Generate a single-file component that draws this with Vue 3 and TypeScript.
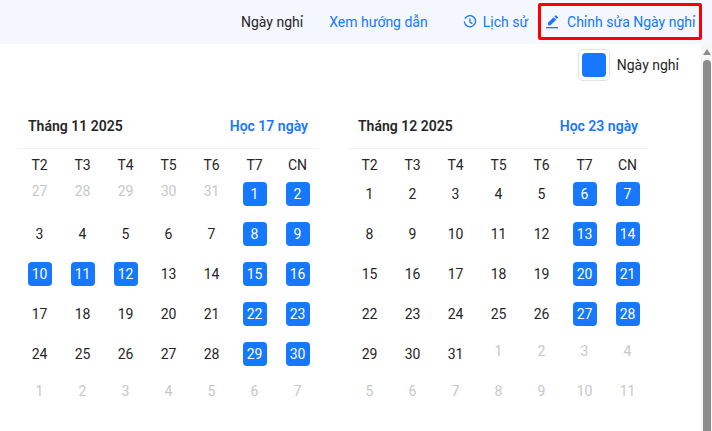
<template>
  <div class="page">
    <header class="topbar">
      <span class="topbar__title">Ngày nghỉ</span>
      <a class="topbar__link topbar__guide">Xem hướng dẫn</a>
      <a class="topbar__link topbar__history">
        <svg width="14" height="14" viewBox="0 0 14 14" fill="none" stroke="currentColor" stroke-width="1.3">
          <path d="M2.2 3.2A5.6 5.6 0 1 1 1.4 7" stroke-linecap="round" />
          <path d="M7 4v3.2l2 1.2" stroke-linecap="round" stroke-linejoin="round" />
        </svg>
        Lịch sử
      </a>
      <a class="topbar__link topbar__edit">
        <svg width="14" height="14" viewBox="0 0 14 14" fill="currentColor">
          <path d="M8.6 2.2l2.5 2.5-5.6 5.6H3v-2.500z" />
          <path d="M9.400 1.400l.9-.9a.7.7 0 0 1 1 0l1.500 1.500a.7.7 0 0 1 0 1l-.9.9z" />
          <rect x="1" y="12" width="12" height="1.300" />
        </svg>
        Chỉnh sửa Ngày nghỉ
      </a>
      <div class="topbar__highlight"></div>
    </header>

    <div class="body">
      <main class="content">
        <div class="legend">
          <span class="legend__swatch"><i></i></span>
          <span class="legend__label">Ngày nghỉ</span>
        </div>
        <div class="months">
          <section v-for="month in months" :key="month.title" class="month">
            <div class="month__head">
              <strong>{{ month.title }}</strong>
              <span>{{ month.summary }}</span>
            </div>
            <div class="month__grid">
              <div v-for="d in weekdays" :key="d" class="weekday">{{ d }}</div>
              <div v-for="(cell, i) in month.cells" :key="i" class="cell">
                <span :class="['day', 'day--' + cell.kind]">{{ cell.day }}</span>
              </div>
            </div>
          </section>
        </div>
      </main>
      <aside class="scrollbar">
        <i class="scrollbar__arrow"></i>
        <i class="scrollbar__thumb"></i>
      </aside>
    </div>
  </div>
</template>

<script setup lang="ts">
type DayKind = 'off' | 'on' | 'muted';

interface Cell {
  day: number;
  kind: DayKind;
}

const weekdays = ['T2', 'T3', 'T4', 'T5', 'T6', 'T7', 'CN'];

function buildCells(prevDays: number[], count: number, nextCount: number, on: number[]): Cell[] {
  const cells: Cell[] = prevDays.map(day => ({ day, kind: 'muted' }));
  for (let day = 1; day <= count; day++) {
    cells.push({ day, kind: on.includes(day) ? 'on' : 'off' });
  }
  for (let day = 1; day <= nextCount; day++) {
    cells.push({ day, kind: 'muted' });
  }
  return cells;
}

const months = [
  {
    title: 'Tháng 11 2025',
    summary: 'Học 17 ngày',
    cells: buildCells([27, 28, 29, 30, 31], 30, 7, [1, 2, 8, 9, 10, 11, 12, 15, 16, 22, 23, 29, 30])
  },
  {
    title: 'Tháng 12 2025',
    summary: 'Học 23 ngày',
    cells: buildCells([], 31, 11, [6, 7, 13, 14, 20, 21, 27, 28])
  }
];
</script>

<style scoped>
.page {
  width: 712px;
  height: 431px;
  overflow: hidden;
  display: flex;
  flex-direction: column;
  font-family: Roboto, "Noto Sans", sans-serif;
  font-size: 14px;
  color: #262626;
  background: #fff;
}

.topbar {
  position: relative;
  flex: none;
  height: 44px;
  display: flex;
  align-items: center;
  padding-left: 241px;
  background: #f4f7fe;
  white-space: nowrap;
}

.topbar__link {
  display: flex;
  align-items: center;
  color: #1677ff;
}

.topbar__guide {
  margin-left: 26px;
}

.topbar__history {
  margin-left: 35px;
  gap: 6px;
}

.topbar__edit {
  margin-left: 17px;
  gap: 8px;
}

.topbar__highlight {
  position: absolute;
  left: 538px;
  top: 3px;
  width: 164px;
  height: 37px;
  box-sizing: border-box;
  border: 3px solid #f00;
  border-radius: 2px;
}

.body {
  flex: 1;
  display: flex;
  min-height: 0;
}

.content {
  flex: 1;
  min-width: 0;
}

.legend {
  display: flex;
  align-items: center;
  justify-content: flex-end;
  gap: 7px;
  margin-top: 5px;
  padding-right: 22px;
}

.legend__swatch {
  width: 32px;
  height: 32px;
  box-sizing: border-box;
  display: flex;
  align-items: center;
  justify-content: center;
  border: 1px solid #e3e3e3;
  border-radius: 5px;
}

.legend__swatch i {
  width: 24px;
  height: 24px;
  border-radius: 4px;
  background: #1677ff;
}

.months {
  display: flex;
  gap: 30px;
  margin-top: 26px;
  padding-left: 18px;
}

.month {
  width: 300px;
}

.month__head {
  height: 41px;
  box-sizing: content-box;
  display: flex;
  align-items: center;
  justify-content: space-between;
  padding: 0 10px;
  border-bottom: 1px solid #f0f0f0;
  font-weight: 600;
}

.month__head strong,
.month__head span {
  font-weight: 600;
  font-size: 14px;
  position: relative;
  top: -2px;
}

.month__head span {
  color: #1677ff;
}

.month__grid {
  display: grid;
  grid-template-columns: repeat(7, 43px);
  grid-template-rows: 25px repeat(6, 40px);
}

.weekday {
  padding-top: 5px;
  line-height: 22px;
  text-align: center;
}

.cell {
  display: flex;
  align-items: center;
  justify-content: center;
}

.day {
  width: 24px;
  height: 24px;
  line-height: 24px;
  text-align: center;
  border-radius: 4px;
}

.day--on {
  background: #1677ff;
  color: #fff;
}

.day--muted {
  color: #c8c8c8;
  transform: translateY(-3px);
}

.scrollbar {
  flex: none;
  width: 11px;
  background: #f6f6f6;
  display: flex;
  flex-direction: column;
  align-items: center;
}

.scrollbar__arrow {
  margin-top: 5px;
  width: 0;
  height: 0;
  border-left: 4px solid transparent;
  border-right: 4px solid transparent;
  border-bottom: 6px solid #8c8c8c;
}

.scrollbar__thumb {
  flex: 1;
  width: 8px;
  margin-top: 5px;
  border-radius: 4px 4px 0 0;
  background: #8c8c8c;
}
</style>
